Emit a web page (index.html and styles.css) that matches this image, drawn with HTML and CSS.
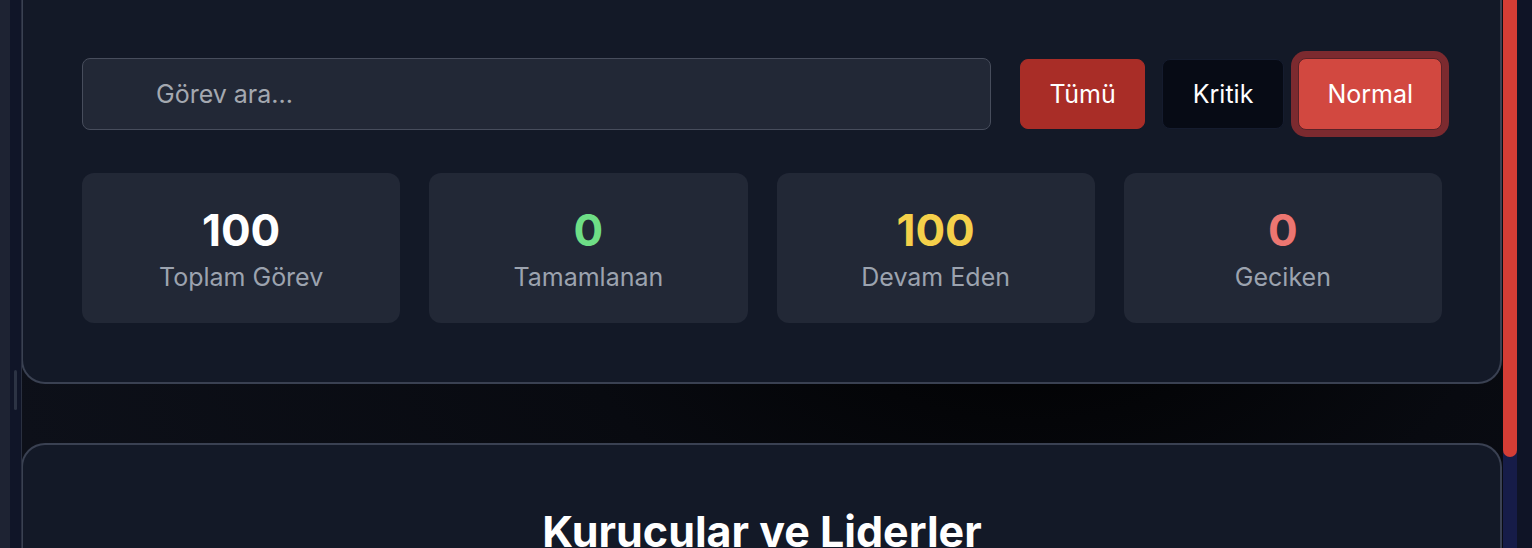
FILE: index.html
```html
<!DOCTYPE html>
<html lang="tr">
<head>
<meta charset="utf-8">
<title>Görevler</title>
<link rel="stylesheet" href="styles.css">
</head>
<body>
<div class="rail-outer"></div>
<div class="rail-inner"><div class="handle"></div></div>
<main class="main">
  <section class="card card-top">
    <div class="toolbar">
      <input class="search" type="text" placeholder="Görev ara...">
      <div class="filters">
        <button class="btn btn-all">Tümü</button>
        <button class="btn btn-critical">Kritik</button>
        <button class="btn btn-normal">Normal</button>
      </div>
    </div>
    <div class="stats">
      <div class="stat"><div class="stat-num num-white">100</div><div class="stat-label">Toplam Görev</div></div>
      <div class="stat"><div class="stat-num num-green">0</div><div class="stat-label">Tamamlanan</div></div>
      <div class="stat"><div class="stat-num num-yellow">100</div><div class="stat-label">Devam Eden</div></div>
      <div class="stat"><div class="stat-num num-red">0</div><div class="stat-label">Geciken</div></div>
    </div>
  </section>
  <section class="card card-bottom">
    <h2 class="section-title">Kurucular ve Liderler</h2>
  </section>
</main>
<div class="scrollbar"><div class="thumb"></div></div>
<div class="rail-right"></div>
</body>
</html>
```
FILE: styles.css
```css
* { box-sizing: border-box; }
html, body { margin: 0; padding: 0; }
body {
  display: flex;
  height: 548px;
  overflow: hidden;
  font-family: Inter, "Noto Sans", sans-serif;
  background: #0f1426;
}
.rail-outer { width: 10px; flex: none; background: #1e2333; }
.rail-inner {
  width: 11px; flex: none; background: #101528;
  display: flex; justify-content: center; padding-top: 370px;
}
.handle { width: 3px; height: 40px; border-radius: 2px; background: #2c3344; }
.main {
  flex: 1;
  display: flex;
  flex-direction: column;
  gap: 59px;
  border-left: 1px solid #2a3040;
  background: radial-gradient(ellipse 70% 120% at 68% 50%, #000 0%, #080a10 45%, #0d1019 100%);
  overflow: hidden;
}
.card {
  background: #131927;
  border: 2px solid #3a4152;
  margin-left: -1px;
  margin-right: 1px;
  flex: none;
}
.card-top {
  border-top: none;
  border-radius: 0 0 24px 24px;
  padding: 58px 58px 59px 59px;
}
.card-bottom {
  border-bottom: none;
  border-radius: 24px 24px 0 0;
  padding: 60px 58px 0 59px;
  flex: 1;
}
.toolbar { display: flex; align-items: center; gap: 29px; }
.search {
  flex: 1;
  height: 72px;
  background: #222836;
  border: 1px solid #474d5c;
  border-radius: 8px;
  padding: 0 0 0 73px;
  font-family: inherit;
  font-size: 25px;
  color: #e5e7eb;
  outline: none;
}
.search::placeholder { color: #a4a8b0; }
.filters { display: flex; align-items: center; gap: 16px; }
.btn {
  height: 70px;
  padding: 0 28px;
  border-radius: 8px;
  font-family: inherit;
  font-size: 25px;
  color: #fff;
  border: 1px solid transparent;
}
.btn-all { background: #a92d27; border-color: #a92d27; }
.btn-critical {
  background: #070b15;
  border-color: #151c2e;
  padding: 0 30px;
  margin-left: 1px;
}
.btn-normal {
  background: #d24840;
  border-color: #5a2228;
  height: 72px;
  box-shadow: 0 0 0 7px #7c2a2f;
  margin-left: -2px;
}
.stats {
  margin-top: 43px;
  display: grid;
  grid-template-columns: repeat(4, 1fr);
  gap: 29px;
}
.stat {
  height: 150px;
  background: #222836;
  border-radius: 12px;
  display: flex;
  flex-direction: column;
  align-items: center;
  justify-content: center;
}
.stat-num { font-size: 44px; font-weight: 700; line-height: 54px; }
.stat-label { font-size: 25px; color: #9ca3af; line-height: 32px; margin-top: 4px; }
.num-white { color: #ffffff; }
.num-green { color: #6ede86; }
.num-yellow { color: #f5d04a; }
.num-red { color: #ec7671; }
.section-title {
  margin: 0;
  text-align: center;
  color: #fff;
  font-size: 43px;
  font-weight: 700;
  line-height: 52px;
}
.scrollbar {
  width: 14px; flex: none;
  background: #161c48;
  display: flex; flex-direction: column;
}
.thumb { height: 457px; background: #d43d35; border-radius: 0 0 7px 7px; }
.rail-right { width: 15px; flex: none; background: #0f1426; }
```
